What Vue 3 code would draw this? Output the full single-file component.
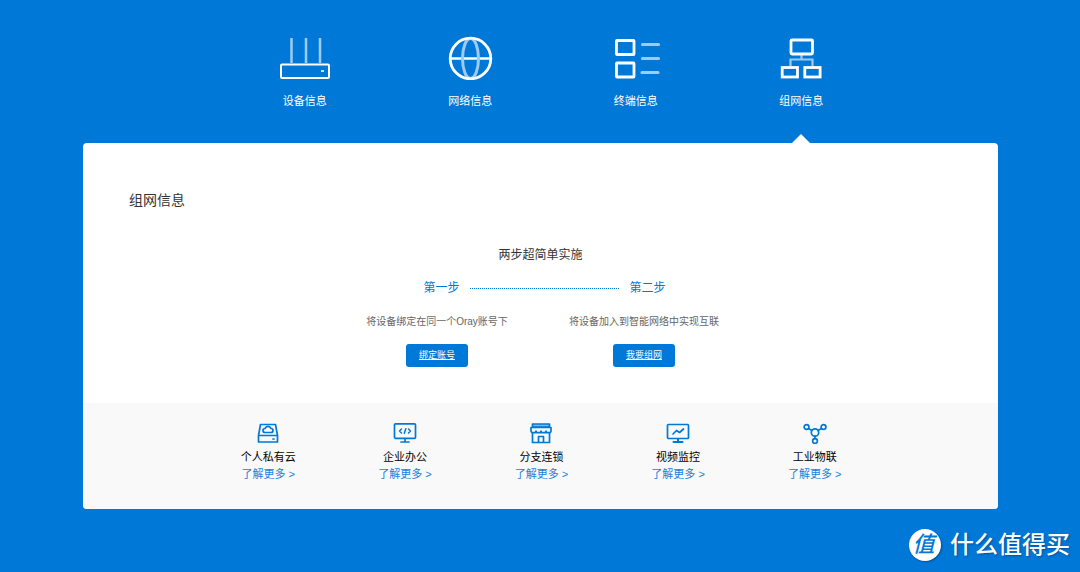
<script setup>
const tabs = [
  { id: 'device', label: '设备信息' },
  { id: 'network', label: '网络信息' },
  { id: 'terminal', label: '终端信息' },
  { id: 'group', label: '组网信息', active: true },
]
const steps = [
  { text: '将设备绑定在同一个Oray账号下', action: '绑定账号' },
  { text: '将设备加入到智能网络中实现互联', action: '我要组网' },
]
const scenes = [
  { id: 'cloud', name: '个人私有云' },
  { id: 'office', name: '企业办公' },
  { id: 'shop', name: '分支连锁' },
  { id: 'video', name: '视频监控' },
  { id: 'iot', name: '工业物联' },
]
</script>

<template>
  <div class="page">
    <nav class="tabs">
      <button v-for="t in tabs" :key="t.id" type="button" class="tab" :class="{ active: t.active }">
        <svg v-if="t.id === 'device'" class="tab-icon" viewBox="0 0 52 44" fill="none" stroke="#fff" stroke-width="2">
          <path d="M12.500 2v25M27 2v25M41 2v25" stroke-width="2.500" opacity=".62" />
          <rect x="2" y="28.500" width="48" height="13.500" rx="1" />
          <path d="M42 35h3" opacity=".8" />
        </svg>
        <svg v-else-if="t.id === 'network'" class="tab-icon" viewBox="0 0 52 44" fill="none" stroke="#fff">
          <path d="M6 22.500h40" stroke-width="2.500" />
          <ellipse cx="26.500" cy="22.500" rx="8" ry="20" stroke="#a0cbf1" stroke-width="3" />
          <circle cx="26.500" cy="22.500" r="20.300" stroke-width="2.800" />
        </svg>
        <svg v-else-if="t.id === 'terminal'" class="tab-icon" viewBox="0 0 52 44" fill="none" stroke="#fff" stroke-width="2.800">
          <rect x="6.500" y="4.500" width="17.500" height="14" rx=".5" />
          <rect x="6.500" y="27" width="17.500" height="14" rx=".5" />
          <path d="M32.500 8.500h16M32.500 22.500h16M32 36.500h16" stroke-width="3.200" stroke-linecap="round" opacity=".62" />
        </svg>
        <svg v-else class="tab-icon" viewBox="0 0 52 44" fill="none" stroke="#fff" stroke-width="2.800">
          <path d="M26.500 18v6M15.500 30v-6.500h22V30" stroke-width="2.200" opacity=".62" />
          <rect x="16" y="4" width="21.500" height="14" rx="1" />
          <rect x="7.200" y="31.500" width="15.300" height="9.500" />
          <rect x="29.800" y="31.500" width="15.300" height="9.500" />
        </svg>
        <span>{{ t.label }}</span>
      </button>
    </nav>

    <main class="card">
      <section class="body">
        <h1>组网信息</h1>
        <div class="guide">
          <h2>两步超简单实施</h2>
          <div class="progress">
            <span>第一步</span>
            <i class="dots"></i>
            <span>第二步</span>
          </div>
          <div class="steps">
            <div v-for="s in steps" :key="s.action" class="step">
              <p>{{ s.text }}</p>
              <a href="#" class="action">{{ s.action }}</a>
            </div>
          </div>
        </div>
      </section>

      <section class="scenes">
        <div v-for="s in scenes" :key="s.id" class="scene">
          <svg class="scene-icon" viewBox="0 0 24 22" fill="none" stroke="#0078d8" stroke-width="1.700" stroke-linejoin="round" stroke-linecap="round">
            <template v-if="s.id === 'cloud'">
              <path d="M2.500 13.500 4.500 2.500h15l2 11v6.500h-19zM2.500 13.500h19" />
              <path d="M9 10.500a2 2 0 0 1 0-4 3.200 3.200 0 0 1 6 0 2 2 0 0 1 0 4z" />
              <path d="M17 17h1" />
            </template>
            <template v-else-if="s.id === 'office'">
              <rect x="1.500" y="1.800" width="21" height="14.500" rx="1" />
              <path d="M8.500 7 6.500 9l2 2M15.500 7l2 2-2 2M12.800 6.800l-1.500 4.500" stroke-width="1.500" />
              <path d="M12 16.500v3M8 20h8" />
            </template>
            <template v-else-if="s.id === 'shop'">
              <rect x="3.500" y="2" width="17" height="3" fill="#0078d8" fill-opacity=".5" />
              <path d="M2 5.500h20v3.500a2.500 1.700 0 0 1-5 0 2.500 1.700 0 0 1-5 0 2.500 1.700 0 0 1-5 0 2.500 1.700 0 0 1-5 0z" />
              <path d="M3.500 11v9.500h17V11M9.500 20v-5.500h5V20" />
            </template>
            <template v-else-if="s.id === 'video'">
              <rect x="1.500" y="2.500" width="21" height="14" rx="1" />
              <path d="m7 12 3.500-3.500 3 2L17.500 7" />
              <path d="M12 17v3M7.500 20h9" stroke-width="2" />
            </template>
            <template v-else>
              <circle cx="12" cy="10.500" r="3.700" />
              <circle cx="3.500" cy="5" r="2.400" />
              <circle cx="20.500" cy="5" r="2.400" />
              <circle cx="12" cy="19" r="2.400" />
              <path d="m5.500 6.500 3.500 2M18.500 6.500l-3.500 2M12 14v2.500" />
            </template>
          </svg>
          <span class="name">{{ s.name }}</span>
          <a href="#" class="more">了解更多 &gt;</a>
        </div>
      </section>
    </main>

    <div class="mark">
      <span class="mark-logo">值</span>
      <span>什么值得买</span>
    </div>
  </div>
</template>

<style>
body {
  margin: 0;
  background: #0078d8;
}
</style>

<style scoped>
.page {
  position: relative;
  box-sizing: border-box;
  min-height: 100vh;
  padding: 36px 82px 62px 83px;
  background: #0078d8;
  font-family: "Liberation Sans", "Noto Sans CJK SC", sans-serif;
  color: #333;
}
.tabs {
  display: grid;
  grid-template-columns: repeat(4, 1fr);
  padding: 0 114px 0 139px;
}
.tab {
  position: relative;
  display: flex;
  flex-direction: column;
  align-items: center;
  gap: 12px;
  height: 107px;
  padding: 0;
  border: 0;
  background: none;
  color: #fff;
  font: inherit;
  font-size: 11px;
  line-height: 18px;
}
.tab-icon {
  width: 52px;
  height: 44px;
}
.tab.active::after {
  content: "";
  position: absolute;
  bottom: 0;
  left: 50%;
  margin-left: -9px;
  border: solid transparent;
  border-width: 0 9px 9px;
  border-bottom-color: #fff;
}
.card {
  border-radius: 4px;
  background: #fff;
  overflow: hidden;
}
.body {
  padding: 46px 46px 36px;
}
h1 {
  margin: 0 0 34px;
  font-size: 14px;
  line-height: 22px;
  font-weight: 400;
}
.guide {
  width: 414px;
  margin: 0 auto;
}
h2 {
  margin: 0 0 14px;
  font-size: 12px;
  line-height: 20px;
  font-weight: 400;
  text-align: center;
}
.progress {
  display: flex;
  align-items: center;
  gap: 10px;
  padding: 0 82px 0 90px;
  color: #0078d8;
  font-size: 12px;
  line-height: 18px;
}
.dots {
  flex: 1;
  border-top: 1px dotted #0078d8;
}
.steps {
  display: grid;
  grid-template-columns: 1fr 1fr;
  margin-top: 17px;
}
.step {
  display: flex;
  flex-direction: column;
  align-items: center;
}
.step p {
  margin: 0 0 14px;
  color: #666;
  font-size: 10px;
  line-height: 16px;
  white-space: nowrap;
}
.action {
  padding: 0 13px;
  border-radius: 3px;
  background: #0078d8;
  color: #fff;
  font-size: 9px;
  line-height: 23px;
  text-decoration: underline;
}
.scenes {
  display: grid;
  grid-template-columns: repeat(5, 1fr);
  padding: 19px 115px 26px 117px;
  background: #f9f9f9;
}
.scene {
  display: flex;
  flex-direction: column;
  align-items: center;
}
.scene-icon {
  width: 24px;
  height: 22px;
  margin-bottom: 4px;
}
.name {
  color: #000;
  font-size: 11px;
  line-height: 18px;
}
.more {
  color: #1b7fdb;
  font-size: 11px;
  line-height: 17px;
  text-decoration: none;
}
.mark {
  position: absolute;
  right: 10px;
  bottom: 10px;
  display: flex;
  align-items: center;
  gap: 9px;
  color: #fff;
  font-size: 24px;
  line-height: 34px;
  font-weight: 500;
  text-shadow: 1px 1px 2px #00509a;
}
.mark-logo {
  box-sizing: border-box;
  width: 32px;
  height: 32px;
  padding-right: 3px;
  border-radius: 50%;
  background: #fff;
  box-shadow: 1px 1px 2px #00509a;
  color: #0078d8;
  font-size: 22px;
  font-style: italic;
  line-height: 32px;
  text-align: center;
  text-shadow: none;
}
</style>
